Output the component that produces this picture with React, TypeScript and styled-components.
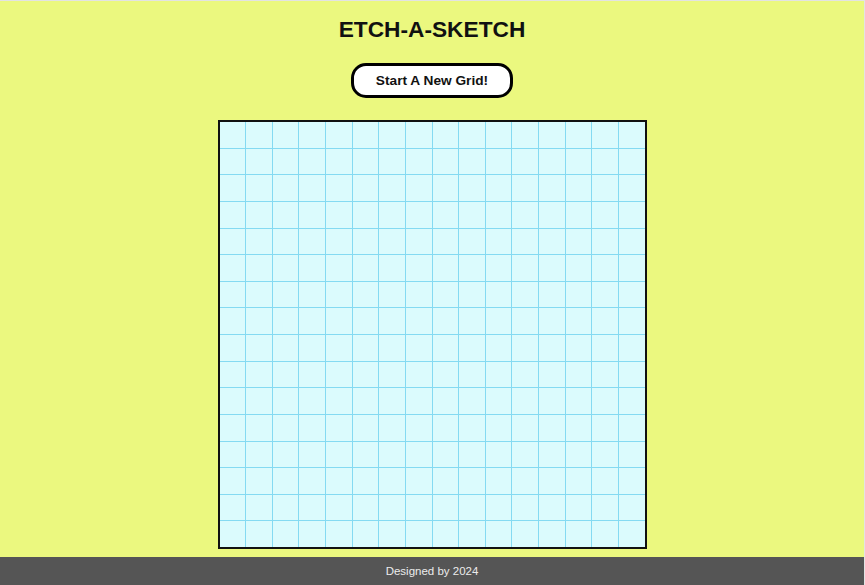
import React from 'react';
import styled, { createGlobalStyle } from 'styled-components';

const GRID_SIZE = 16;

const GlobalStyle = createGlobalStyle`
  html, body {
    margin: 0;
    padding: 0;
  }
  body {
    font-family: 'Liberation Sans', Arial, sans-serif;
    background-color: #ebf87f;
  }
`;

const Page = styled.div`
  box-sizing: border-box;
  min-height: 100vh;
  display: flex;
  flex-direction: column;
  align-items: center;
  border-top: 1px solid #e3e3e3;
  border-right: 1px solid #e3e3e3;
  background-color: #ebf87f;
`;

const Title = styled.h1`
  margin: 15px 0 0;
  font-size: 22.7px;
  line-height: 26px;
  font-weight: 700;
  color: #111;
`;

const NewGridButton = styled.button`
  box-sizing: border-box;
  margin-top: 21px;
  width: 162px;
  height: 35px;
  border: 3px solid #000;
  border-radius: 15px;
  background: #fff;
  font-family: inherit;
  font-size: 13.7px;
  font-weight: 700;
  color: #111;
  cursor: pointer;
`;

const Board = styled.div`
  box-sizing: border-box;
  margin-top: 22px;
  width: 429px;
  height: 429px;
  border: 2px solid #111;
  display: grid;
  grid-template-columns: repeat(${GRID_SIZE}, 1fr);
  grid-template-rows: repeat(${GRID_SIZE}, 1fr);
  gap: 1px;
  background-color: #84daf2;
`;

const Cell = styled.div`
  background-color: #dbfbfd;
`;

const Footer = styled.footer`
  margin-top: auto;
  align-self: stretch;
  height: 28px;
  display: flex;
  align-items: center;
  justify-content: center;
  background-color: #555555;
  color: #ececec;
  font-size: 11.5px;
`;

const App = () => {
  const cells = Array.from({ length: GRID_SIZE * GRID_SIZE }, (_, i) => i);

  return (
    <>
      <GlobalStyle />
      <Page>
        <Title>ETCH-A-SKETCH</Title>
        <NewGridButton>Start A New Grid!</NewGridButton>
        <Board>
          {cells.map((i) => (
            <Cell key={i} />
          ))}
        </Board>
        <Footer>Designed by 2024</Footer>
      </Page>
    </>
  );
};

export default App;
